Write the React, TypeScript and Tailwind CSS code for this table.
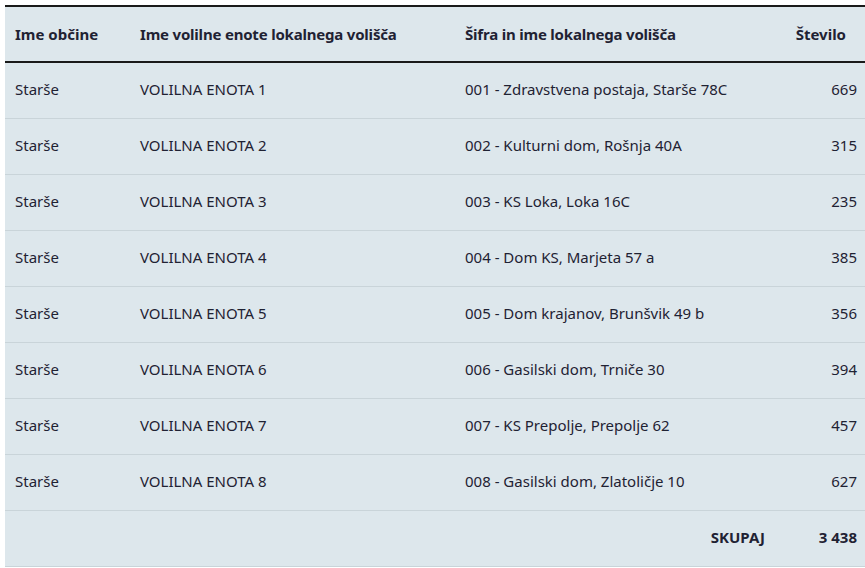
const rows = [
  ["Starše", "VOLILNA ENOTA 1", "001 - Zdravstvena postaja, Starše 78C", "669"],
  ["Starše", "VOLILNA ENOTA 2", "002 - Kulturni dom, Rošnja 40A", "315"],
  ["Starše", "VOLILNA ENOTA 3", "003 - KS Loka, Loka 16C", "235"],
  ["Starše", "VOLILNA ENOTA 4", "004 - Dom KS, Marjeta 57 a", "385"],
  ["Starše", "VOLILNA ENOTA 5", "005 - Dom krajanov, Brunšvik 49 b", "356"],
  ["Starše", "VOLILNA ENOTA 6", "006 - Gasilski dom, Trniče 30", "394"],
  ["Starše", "VOLILNA ENOTA 7", "007 - KS Prepolje, Prepolje 62", "457"],
  ["Starše", "VOLILNA ENOTA 8", "008 - Gasilski dom, Zlatoličje 10", "627"],
];

export default function App() {
  return (
    <div className="bg-white pl-[5px] pt-[5px] h-[568px] overflow-hidden font-['Noto_Sans',sans-serif] text-[15px] text-[#1f2233]">
      <table className="w-[860px] border-collapse bg-[#dde7ec] table-fixed">
        <colgroup>
          <col className="w-[135px]" />
          <col className="w-[325px]" />
          <col className="w-[320px]" />
          <col className="w-[80px]" />
        </colgroup>
        <thead>
          <tr className="h-[56px] border-t-2 border-b-2 border-[#1a1a1a]">
            <th className="text-left font-bold pl-[10px]">Ime občine</th>
            <th className="text-left font-bold tracking-[-0.2px]">Ime volilne enote lokalnega volišča</th>
            <th className="text-left font-bold tracking-[-0.2px]">Šifra in ime lokalnega volišča</th>
            <th className="text-right font-bold pr-[19px]">Število</th>
          </tr>
        </thead>
        <tbody>
          {rows.map((r, i) => (
            <tr key={i} className="h-[56px] border-b border-[#c9d4d9]">
              <td className="pl-[10px] pb-[2px]">{r[0]}</td>
              <td className="pb-[2px]">{r[1]}</td>
              <td className="pb-[2px]">{r[2]}</td>
              <td className="text-right pr-[8px] pb-[2px]">{r[3]}</td>
            </tr>
          ))}
          <tr className="h-[56px] border-b border-[#c9d4d9]">
            <td />
            <td />
            <td className="text-right font-bold pr-[20px] pb-[2px]">SKUPAJ</td>
            <td className="text-right font-bold pr-[8px] pb-[2px]">3 438</td>
          </tr>
        </tbody>
      </table>
    </div>
  );
}
